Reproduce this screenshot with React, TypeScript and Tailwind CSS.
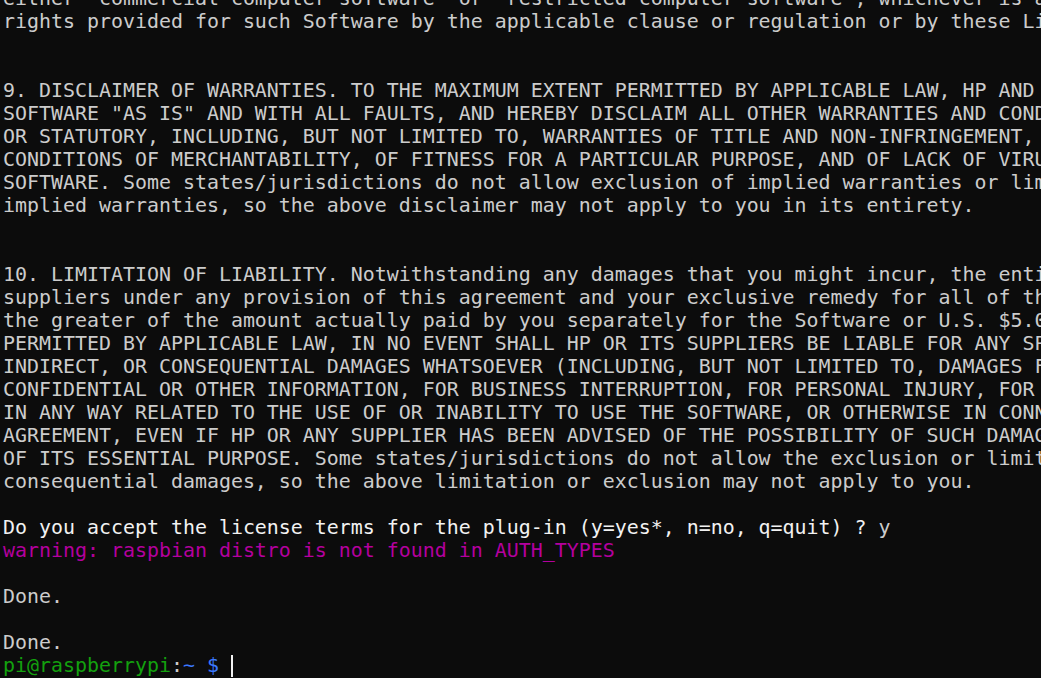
const licenseLines = [
  'either "commercial computer software" or "restricted computer software", whichever is applicable. The Government\'s',
  "rights provided for such Software by the applicable clause or regulation or by these License Terms.",
  "",
  "",
  "9. DISCLAIMER OF WARRANTIES. TO THE MAXIMUM EXTENT PERMITTED BY APPLICABLE LAW, HP AND ITS SUPPLIERS PROVIDE THE",
  'SOFTWARE "AS IS" AND WITH ALL FAULTS, AND HEREBY DISCLAIM ALL OTHER WARRANTIES AND CONDITIONS, EITHER EXPRESS, IMPLIED,',
  "OR STATUTORY, INCLUDING, BUT NOT LIMITED TO, WARRANTIES OF TITLE AND NON-INFRINGEMENT, ANY IMPLIED WARRANTIES, DUTIES OR",
  "CONDITIONS OF MERCHANTABILITY, OF FITNESS FOR A PARTICULAR PURPOSE, AND OF LACK OF VIRUSES ALL WITH REGARD TO THE",
  "SOFTWARE. Some states/jurisdictions do not allow exclusion of implied warranties or limitations on the duration of",
  "implied warranties, so the above disclaimer may not apply to you in its entirety.",
  "",
  "",
  "10. LIMITATION OF LIABILITY. Notwithstanding any damages that you might incur, the entire liability of HP and any of its",
  "suppliers under any provision of this agreement and your exclusive remedy for all of the foregoing shall be limited to",
  "the greater of the amount actually paid by you separately for the Software or U.S. $5.00. TO THE MAXIMUM EXTENT",
  "PERMITTED BY APPLICABLE LAW, IN NO EVENT SHALL HP OR ITS SUPPLIERS BE LIABLE FOR ANY SPECIAL, INCIDENTAL,",
  "INDIRECT, OR CONSEQUENTIAL DAMAGES WHATSOEVER (INCLUDING, BUT NOT LIMITED TO, DAMAGES FOR LOSS OF PROFITS OR",
  "CONFIDENTIAL OR OTHER INFORMATION, FOR BUSINESS INTERRUPTION, FOR PERSONAL INJURY, FOR LOSS OF PRIVACY ARISING OUT OF OR",
  "IN ANY WAY RELATED TO THE USE OF OR INABILITY TO USE THE SOFTWARE, OR OTHERWISE IN CONNECTION WITH ANY PROVISION OF THIS",
  "AGREEMENT, EVEN IF HP OR ANY SUPPLIER HAS BEEN ADVISED OF THE POSSIBILITY OF SUCH DAMAGES AND EVEN IF THE REMEDY FAILS",
  "OF ITS ESSENTIAL PURPOSE. Some states/jurisdictions do not allow the exclusion or limitation of incidental or",
  "consequential damages, so the above limitation or exclusion may not apply to you.",
  "",
];

export default function App() {
  return (
    <div className="h-[678px] w-full overflow-hidden bg-[#0c0c0c] font-['DejaVu_Sans_Mono','Liberation_Mono',monospace] text-[19.93px] leading-[23px] text-[#cccccc]">
      <div className="-mt-[13px] pl-[3px] whitespace-pre">
        {licenseLines.map((line, i) => (
          <div key={i} className="h-[23px]">
            {line}
          </div>
        ))}
        <div className="h-[23px]">
          <span className="text-[#f2f2f2]">
            Do you accept the license terms for the plug-in (y=yes*, n=no, q=quit) ?{" "}
          </span>
          y
        </div>
        <div className="h-[23px] text-[#b4009e]">
          warning: raspbian distro is not found in AUTH_TYPES
        </div>
        <div className="h-[23px]" />
        <div className="h-[23px]">Done.</div>
        <div className="h-[23px]" />
        <div className="h-[23px]">Done.</div>
        <div className="flex h-[23px] items-center">
          <span className="text-[#13a10e]">pi@raspberrypi</span>
          <span>:</span>
          <span className="text-[#3b78ff]">~ $ </span>
          <span className="h-[22px] w-[2px] bg-[#f2f2f2]" />
        </div>
      </div>
    </div>
  );
}
